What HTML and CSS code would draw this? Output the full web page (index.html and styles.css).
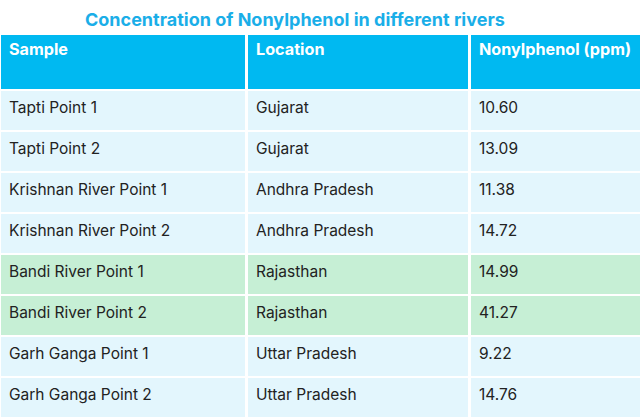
FILE: index.html
```html
<!DOCTYPE html>
<html lang="en">
<head>
<meta charset="utf-8">
<title>Concentration of Nonylphenol in different rivers</title>
<link rel="stylesheet" href="styles.css">
</head>
<body>
<div class="page">
  <h1 class="title">Concentration of Nonylphenol in different rivers</h1>
  <div class="table">
    <div class="cell head">Sample</div>
    <div class="cell head">Location</div>
    <div class="cell head">Nonylphenol (ppm)</div>

    <div class="cell">Tapti Point 1</div>
    <div class="cell">Gujarat</div>
    <div class="cell">10.60</div>

    <div class="cell">Tapti Point 2</div>
    <div class="cell">Gujarat</div>
    <div class="cell">13.09</div>

    <div class="cell">Krishnan River Point 1</div>
    <div class="cell">Andhra Pradesh</div>
    <div class="cell">11.38</div>

    <div class="cell">Krishnan River Point 2</div>
    <div class="cell">Andhra Pradesh</div>
    <div class="cell">14.72</div>

    <div class="cell green">Bandi River Point 1</div>
    <div class="cell green">Rajasthan</div>
    <div class="cell green">14.99</div>

    <div class="cell green">Bandi River Point 2</div>
    <div class="cell green">Rajasthan</div>
    <div class="cell green">41.27</div>

    <div class="cell">Garh Ganga Point 1</div>
    <div class="cell">Uttar Pradesh</div>
    <div class="cell">9.22</div>

    <div class="cell">Garh Ganga Point 2</div>
    <div class="cell">Uttar Pradesh</div>
    <div class="cell">14.76</div>
  </div>
</div>
</body>
</html>
```

FILE: styles.css
```css
html, body {
  margin: 0;
  padding: 0;
  background: #ffffff;
  overflow: hidden;
}

body {
  font-family: "Inter", "Liberation Sans", sans-serif;
  color: #222222;
}

.page {
  width: 640px;
}

.title {
  margin: 0;
  height: 35px;
  box-sizing: border-box;
  padding: 9px 0 0 85px;
  font-size: 18px;
  line-height: 22px;
  font-weight: 700;
  color: #1aaee8;
  white-space: nowrap;
}

.table {
  display: grid;
  grid-template-columns: 244px 220px 1fr;
  grid-template-rows: 54px repeat(8, 39px);
  gap: 2px 3px;
  padding-left: 1px;
}

.cell {
  background: #e3f6fd;
  padding: 7px 8px 0;
  font-size: 15.5px;
  line-height: 20px;
  white-space: nowrap;
  overflow: hidden;
}

.cell.head {
  background: #00b9f1;
  color: #ffffff;
  font-size: 16.2px;
  font-weight: 700;
  padding-top: 4px;
}

.cell.green {
  background: #c6efd5;
}
```
